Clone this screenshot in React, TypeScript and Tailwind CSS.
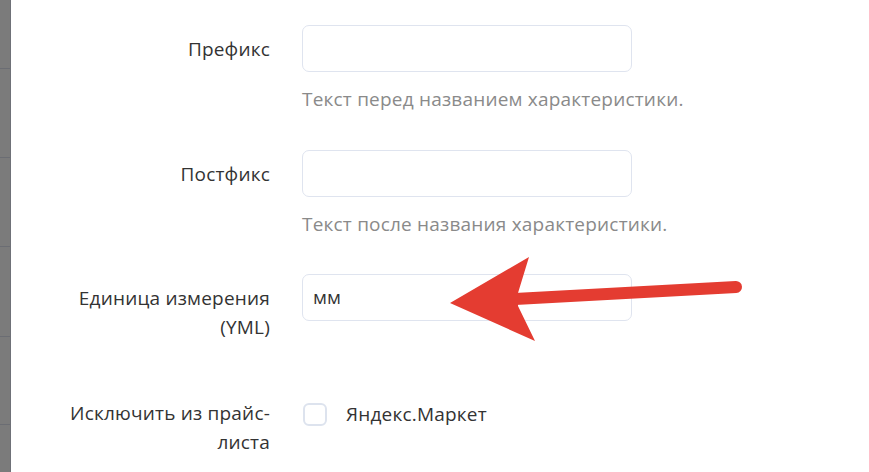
const font = { fontFamily: '"Open Sans", "Noto Sans", sans-serif' }

const FieldRow = ({ label, children, className }: { label: React.ReactNode; children: React.ReactNode; className?: string }) => (
	<div className={`flex ${className ?? ""}`}>
		<div className="w-[260px] shrink-0 pt-[10px] pr-[1px] text-right text-[19px] leading-[29px] tracking-[0.2px] text-[#333]">{label}</div>
		<div className="ml-[31px] w-[330px] shrink-0">{children}</div>
	</div>
)

const TextInput = ({ value }: { value?: string }) => (
	<div className="h-[47px] w-full rounded-[7px] border border-[#dfe4ef] bg-white px-[10px] text-[19px] leading-[45px] text-[#333]">
		{value}
	</div>
)

const Hint = ({ children }: { children: React.ReactNode }) => (
	<div className="mt-[15px] whitespace-nowrap text-[19px] leading-[24px] tracking-[0.2px] text-[#8a8a8a]">{children}</div>
)

export default function App() {
	return (
		<div className="relative flex h-[472px] w-[869px] overflow-hidden bg-white" style={font}>
			<div className="flex w-[11px] shrink-0 flex-col border-r border-[#6f7178] bg-[#7b7b7b]">
				<div className="h-[69px] border-b border-[#6b6d73]" />
				<div className="h-[89px] border-b border-[#6b6d73]" />
				<div className="h-[89px] border-b border-[#6b6d73]" />
				<div className="h-[90px] border-b border-[#6b6d73]" />
				<div className="h-[88px] border-b border-[#6b6d73]" />
			</div>

			<div className="flex flex-col pt-[25px]">
				<FieldRow label="Префикс" className="mb-[39px]">
					<TextInput />
					<Hint>Текст перед названием характеристики.</Hint>
				</FieldRow>

				<FieldRow label="Постфикс" className="mb-[38px]">
					<TextInput />
					<Hint>Текст после названия характеристики.</Hint>
				</FieldRow>

				<FieldRow label={<>Единица измерения<br />(YML)</>} className="mb-[47px]">
					<TextInput value="мм" />
				</FieldRow>

				<FieldRow label={<>Исключить из прайс-<br />листа</>}>
					<label className="mt-[11px] flex h-[29px] items-center">
						<span className="ml-[1px] block h-[23px] w-[24px] rounded-[6px] border-2 border-[#dde3ee] bg-white" />
						<span className="ml-[19px] text-[19px] tracking-[0.2px] text-[#333]">Яндекс.Маркет</span>
					</label>
				</FieldRow>
			</div>

			<svg className="pointer-events-none absolute inset-0" width="869" height="472" viewBox="0 0 869 472">
				<line x1="736" y1="287" x2="515" y2="299" stroke="#e43c31" strokeWidth="12" strokeLinecap="round" />
				<polygon points="450,303 529,257 518,293 518,306 535,341" fill="#e43c31" />
			</svg>
		</div>
	)
}
